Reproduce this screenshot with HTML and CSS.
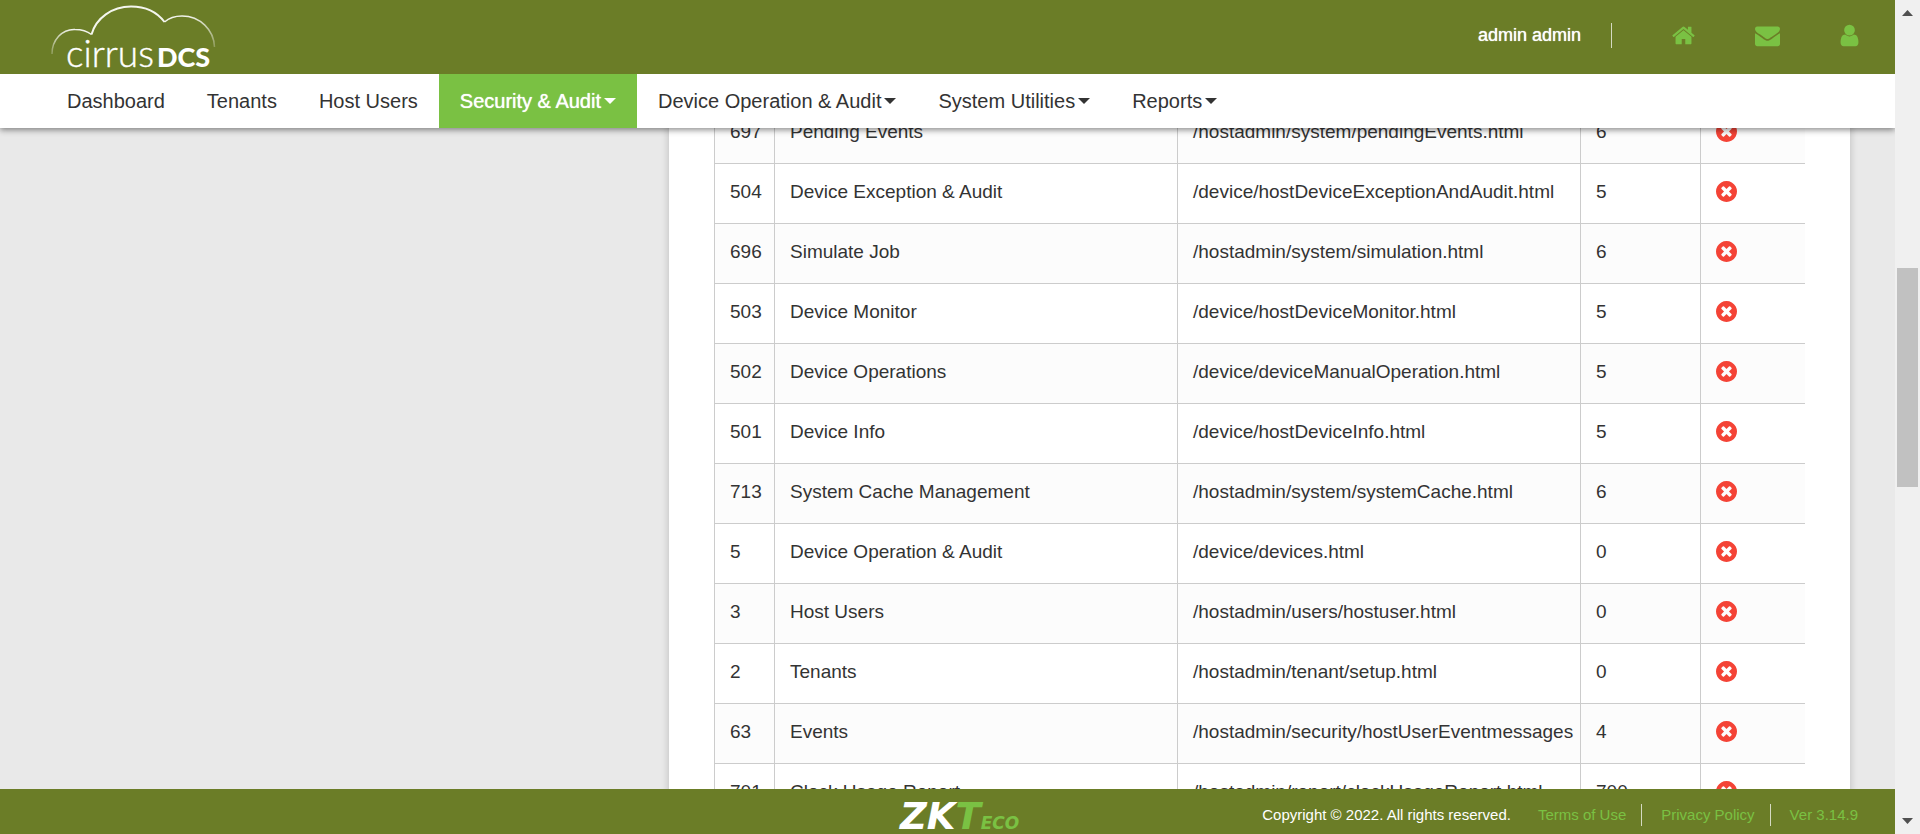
FILE: index.html
```html
<!DOCTYPE html>
<html lang="en">
<head>
<meta charset="utf-8">
<title>Cirrus DCS - Security &amp; Audit</title>
<link rel="stylesheet" href="styles.css">
</head>
<body>
<svg class="sprite" aria-hidden="true">
  <symbol id="times-circle" viewBox="128 128 1536 1536"><path d="M1277 1122q0-26-19-45l-181-181 181-181q19-19 19-45 0-27-19-46l-90-90q-19-19-46-19-26 0-45 19l-181 181-181-181q-19-19-45-19-27 0-46 19l-90 90q-19 19-19 46 0 26 19 45l181 181-181 181q-19 19-19 45 0 27 19 46l90 90q19 19 46 19 26 0 45-19l181-181 181 181q19 19 45 19 27 0 46-19l90-90q19-19 19-46zm387-226q0 209-103 385.500t-279.500 279.500-385.500 103-385.500-103-279.500-279.500-103-385.500 103-385.500 279.500-279.500 385.500-103 385.500 103 279.500 279.500 103 385.500z"/></symbol>
</svg>
<div class="shell">
  <div class="view">
    <header class="top">
      <div class="brandbar">
        <a class="logo" href="#" aria-label="cirrus DCS">
          <svg width="168" height="74" viewBox="50 0 168 74">
            <defs>
              <linearGradient id="fadeL" x1="0" y1="1" x2="0.5" y2="0"><stop offset="0" stop-color="#fff" stop-opacity=".25"/><stop offset="1" stop-color="#fff" stop-opacity=".9"/></linearGradient>
              <linearGradient id="fadeR" x1="1" y1="1" x2="0.5" y2="0"><stop offset="0" stop-color="#fff" stop-opacity=".25"/><stop offset="1" stop-color="#fff" stop-opacity=".9"/></linearGradient>
            </defs>
            <path d="M52 54C52 40 62 29 75 29.500C82 29.500 87 31 91.500 34.500" fill="none" stroke="url(#fadeL)" stroke-width="1.500"/>
            <path d="M91.500 34.500C96 18 112 6.500 131 6.500C145 6.500 157 12 164.500 22" fill="none" stroke="#f4f6ee" stroke-width="2"/>
            <path d="M164.500 22C169 18 175 16 182 16C200 16 214 30 214.500 47" fill="none" stroke="url(#fadeR)" stroke-width="1.500"/>
            <text class="logo-thin" x="66" y="67">cirrus</text>
            <text class="logo-bold" x="157" y="67">DCS</text>
          </svg>
        </a>
        <div class="account">
          <span class="user-name">admin admin</span>
          <a href="#" class="tool" aria-label="Home"><svg width="23" height="25" viewBox="0 0 1664 1792"><path d="M1408 992v480q0 26-19 45t-45 19h-384v-384h-256v384h-384q-26 0-45-19t-19-45v-480q0-1 .5-3t.5-3l575-474 575 474q1 2 1 6zm223-69l-62 74q-8 9-21 11h-3q-13 0-21-7l-692-577-692 577q-12 8-24 7-13-2-21-11l-62-74q-8-10-7-23.500t11-21.500l719-599q32-26 76-26t76 26l244 204v-195q0-14 9-23t23-9h192q14 0 23 9t9 23v408l219 182q10 8 11 21.500t-7 23.500z"/></svg></a>
          <a href="#" class="tool" aria-label="Messages"><svg width="25" height="25" viewBox="0 0 1792 1792"><path d="M1792 710v794q0 66-47 113t-113 47h-1472q-66 0-113-47t-47-113v-794q44 49 101 87 362 246 497 345 57 42 92.500 65.500t94.500 48 110 24.500h2q51 0 110-24.500t94.500-48 92.500-65.500q170-123 498-345 57-39 100-87zm0-294q0 79-49 151t-122 123q-376 261-468 325-10 7-42.500 31t-54 38.500-52 32.500-57.500 27-50 9h-2q-23 0-50-9t-57.500-27-52-32.500-54-38.500-42.500-31q-91-64-262-182.500t-205-142.500q-62-42-117-115.500t-55-136.500q0-78 41.500-130t118.500-52h1472q65 0 112.500 47t47.500 113z"/></svg></a>
          <a href="#" class="tool" aria-label="Profile"><svg width="19" height="25" viewBox="226 0 1340 1792"><path d="M1536 1399q0 109-62.500 187t-150.500 78h-854q-88 0-150.500-78t-62.500-187q0-85 8.500-160.500t31.500-152 58.500-131 94-89 134.500-34.500q131 128 313 128t313-128q76 0 134.500 34.500t94 89 58.500 131 31.500 152 8.500 160.500zm-256-887q0 159-112.500 271.500t-271.500 112.500-271.500-112.500-112.500-271.500 112.500-271.500 271.500-112.500 271.500 112.500 112.500 271.500z"/></svg></a>
        </div>
      </div>
      <nav class="menu">
        <a href="#">Dashboard</a>
        <a href="#">Tenants</a>
        <a href="#">Host Users</a>
        <a href="#" class="drop active">Security &amp; Audit</a>
        <a href="#" class="drop">Device Operation &amp; Audit</a>
        <a href="#" class="drop">System Utilities</a>
        <a href="#" class="drop">Reports</a>
      </nav>
    </header>

    <main class="content">
      <section class="panel">
        <table class="grid">
          <colgroup><col class="c-id"><col><col><col class="c-parent"><col class="c-action"></colgroup>
          <tbody>
            <tr><td>697</td><td>Pending Events</td><td>/hostadmin/system/pendingEvents.html</td><td>6</td><td><button class="remove" aria-label="Remove"><svg><use href="#times-circle"/></svg></button></td></tr>
            <tr><td>504</td><td>Device Exception &amp; Audit</td><td>/device/hostDeviceExceptionAndAudit.html</td><td>5</td><td><button class="remove" aria-label="Remove"><svg><use href="#times-circle"/></svg></button></td></tr>
            <tr><td>696</td><td>Simulate Job</td><td>/hostadmin/system/simulation.html</td><td>6</td><td><button class="remove" aria-label="Remove"><svg><use href="#times-circle"/></svg></button></td></tr>
            <tr><td>503</td><td>Device Monitor</td><td>/device/hostDeviceMonitor.html</td><td>5</td><td><button class="remove" aria-label="Remove"><svg><use href="#times-circle"/></svg></button></td></tr>
            <tr><td>502</td><td>Device Operations</td><td>/device/deviceManualOperation.html</td><td>5</td><td><button class="remove" aria-label="Remove"><svg><use href="#times-circle"/></svg></button></td></tr>
            <tr><td>501</td><td>Device Info</td><td>/device/hostDeviceInfo.html</td><td>5</td><td><button class="remove" aria-label="Remove"><svg><use href="#times-circle"/></svg></button></td></tr>
            <tr><td>713</td><td>System Cache Management</td><td>/hostadmin/system/systemCache.html</td><td>6</td><td><button class="remove" aria-label="Remove"><svg><use href="#times-circle"/></svg></button></td></tr>
            <tr><td>5</td><td>Device Operation &amp; Audit</td><td>/device/devices.html</td><td>0</td><td><button class="remove" aria-label="Remove"><svg><use href="#times-circle"/></svg></button></td></tr>
            <tr><td>3</td><td>Host Users</td><td>/hostadmin/users/hostuser.html</td><td>0</td><td><button class="remove" aria-label="Remove"><svg><use href="#times-circle"/></svg></button></td></tr>
            <tr><td>2</td><td>Tenants</td><td>/hostadmin/tenant/setup.html</td><td>0</td><td><button class="remove" aria-label="Remove"><svg><use href="#times-circle"/></svg></button></td></tr>
            <tr><td>63</td><td>Events</td><td>/hostadmin/security/hostUserEventmessages</td><td>4</td><td><button class="remove" aria-label="Remove"><svg><use href="#times-circle"/></svg></button></td></tr>
            <tr><td>701</td><td>Clock Usage Report</td><td>/hostadmin/report/clockUsageReport.html</td><td>700</td><td><button class="remove" aria-label="Remove"><svg><use href="#times-circle"/></svg></button></td></tr>
          </tbody>
        </table>
      </section>
    </main>

    <footer class="bottom">
      <svg class="maker" width="122" height="32" viewBox="0 0 122 32" role="img" aria-label="ZKTeco">
        <text class="mk" x="0" y="30" fill="#fff">ZK<tspan fill="#7ac143">T</tspan><tspan class="mk-small" fill="#7ac143">ECO</tspan></text>
      </svg>
      <span class="copy">Copyright © 2022. All rights reserved.</span>
      <ul class="legal">
        <li><a href="#">Terms of Use</a></li>
        <li><a href="#">Privacy Policy</a></li>
        <li><a href="#">Ver 3.14.9</a></li>
      </ul>
    </footer>
  </div>

  <div class="scroll" aria-hidden="true">
    <svg width="11" height="6" viewBox="0 0 11 6"><path d="M0 6L5.500 0L11 6z"/></svg>
    <div class="track"><div class="thumb"></div></div>
    <svg width="11" height="6" viewBox="0 0 11 6"><path d="M0 0L5.500 6L11 0z"/></svg>
  </div>
</div>
</body>
</html>
```
FILE: styles.css
```css
* { box-sizing: border-box; }
body {
  margin: 0;
  font-family: "Liberation Sans", Arial, sans-serif;
  color: #333;
  background: #e9e9e9;
}
a { color: inherit; text-decoration: none; }
.sprite { position: absolute; width: 0; height: 0; }

.shell { display: flex; height: 100vh; overflow: hidden; }
.view { position: relative; flex: 1; min-width: 0; overflow: hidden; }

/* Header */
.top {
  position: absolute;
  top: 0;
  left: 0;
  right: 0;
  z-index: 2;
  background: #fff;
  box-shadow: 0 2px 6px rgba(0, 0, 0, .45);
}
.brandbar {
  display: flex;
  justify-content: space-between;
  height: 74px;
  padding: 0 36px 0 50px;
  background: #6b7d27;
}
.logo svg { display: block; }
.logo text { font-family: Lato, sans-serif; fill: #fff; }
.logo .logo-thin { font-size: 37px; font-weight: 300; stroke: #fff; stroke-width: .4px; }
.logo .logo-bold { font-size: 27px; font-weight: 900; }
.account { display: flex; align-items: center; gap: 60px; height: 71px; }
.user-name {
  padding-right: 30px;
  border-right: 1px solid #d5dac2;
  font-size: 18px;
  line-height: 25px;
  color: #fff;
  text-shadow: 0 0 1px #fff;
}
.tool svg { display: block; fill: #7ac143; }

.menu { display: flex; padding-left: 46px; font-size: 20px; line-height: 54px; }
.menu a { padding: 0 21px; }
.drop { display: flex; align-items: center; gap: 3px; }
.drop::after {
  content: "";
  border: 6px solid transparent;
  border-top-color: currentColor;
  border-bottom: 0;
}
.active { background: #7ac143; color: #fff; text-shadow: 0 0 1px #fff; }

/* Table */
.content { padding: 0 45px 0 669px; }
.panel {
  padding: 104px 45px 45px;
  background: #fff;
  box-shadow: 0 0 8px rgba(0, 0, 0, .2);
}
.grid { width: 100%; table-layout: fixed; border-collapse: separate; border-spacing: 0; }
.c-id { width: 60px; }
.c-parent { width: 120px; }
.c-action { width: 105px; }
.grid td {
  height: 60px;
  padding: 0 0 4px 15px;
  border-left: 1px solid #ccc;
  border-bottom: 1px solid #ccc;
  font-size: 19px;
  white-space: nowrap;
  overflow: hidden;
}
.grid tr:nth-child(odd) { background: #fcfcfc; }
.remove { display: block; padding: 0; border: 0; background: none; }
.remove svg { display: block; width: 21px; height: 21px; fill: #f44336; }

/* Footer */
.bottom {
  position: absolute;
  left: 0;
  right: 0;
  bottom: 0;
  z-index: 2;
  display: flex;
  justify-content: flex-end;
  align-items: center;
  height: 45px;
  padding: 6px 37px 0 0;
  background: #6b7d27;
  font-size: 15px;
  line-height: 22px;
}
.maker { margin-right: 240px; overflow: visible; }
.mk {
  font-family: "DejaVu Sans", sans-serif;
  font-weight: bold;
  font-style: italic;
  font-size: 37px;
}
.mk-small { font-size: 17px; }
.copy { margin-right: 27px; color: #fff; }
.legal { display: flex; margin: 0; padding: 0; list-style: none; color: #7ac143; }
.legal li + li { margin-left: 15px; padding-left: 19px; border-left: 1px solid #d5dac2; }

/* Scrollbar */
.scroll {
  display: flex;
  flex-direction: column;
  align-items: center;
  width: 25px;
  padding: 10px 0;
  background: #f0f0f0;
}
.scroll svg { fill: #505050; }
.track { flex: 1; width: 21px; padding-top: 252px; }
.thumb { height: 219px; background: #c1c1c1; }
```
